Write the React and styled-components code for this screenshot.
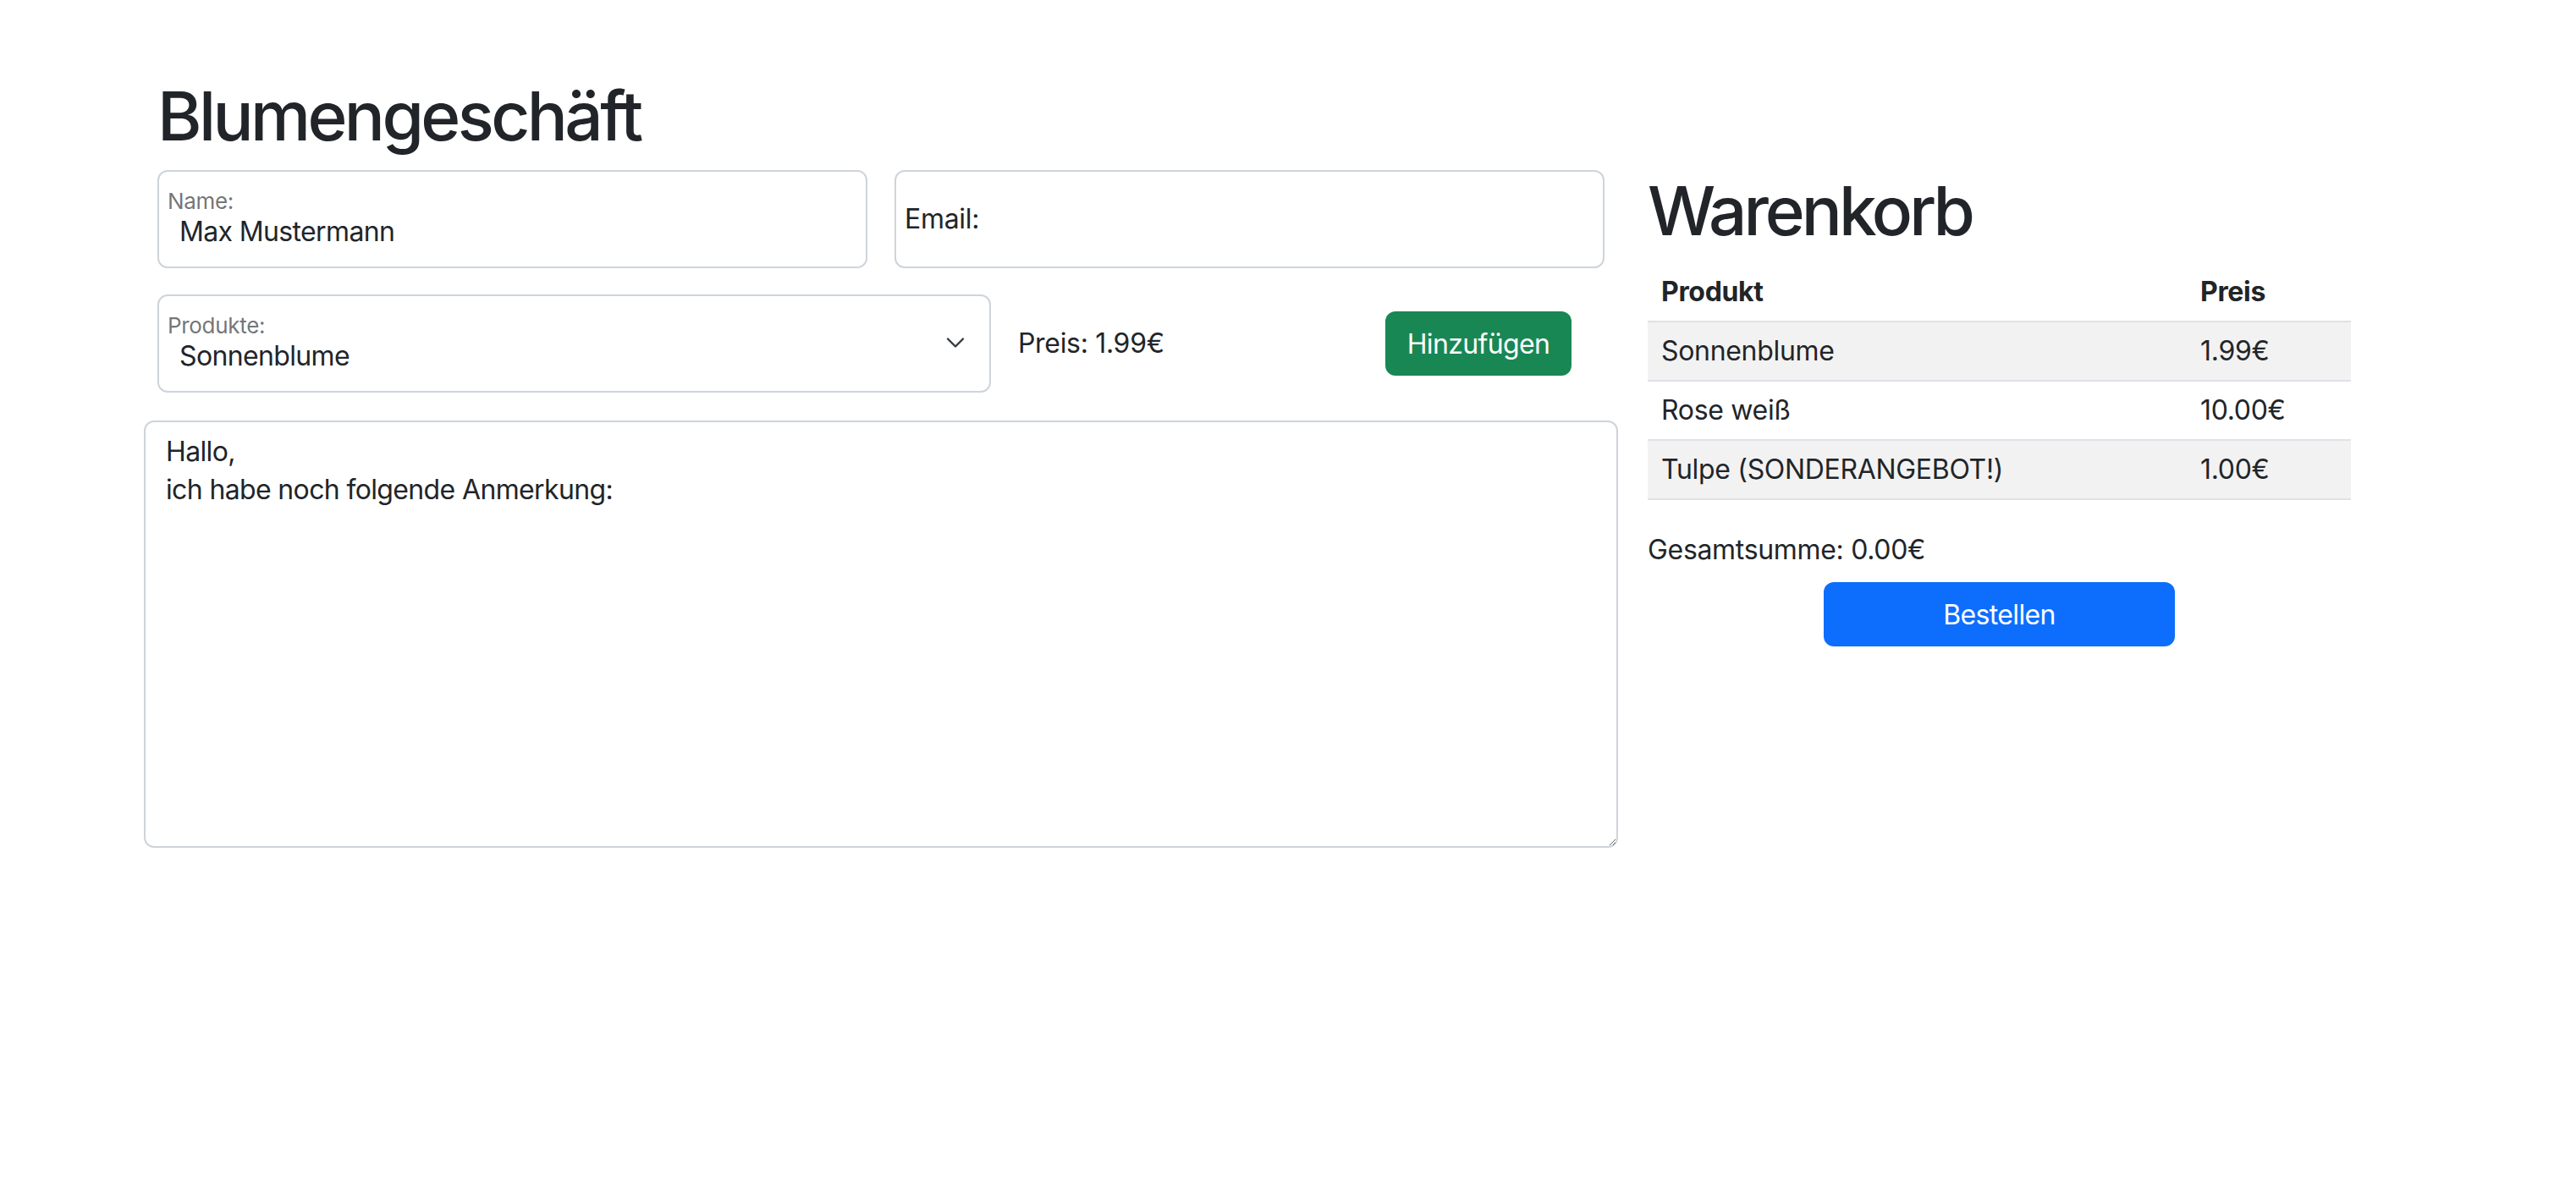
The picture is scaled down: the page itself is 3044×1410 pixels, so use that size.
import React from "react";
import styled, { createGlobalStyle } from "styled-components";

const GlobalStyle = createGlobalStyle`
  *, *::before, *::after {
    box-sizing: border-box;
  }
  body {
    margin: 0;
    background: #fff;
    color: #212529;
    font-family: Inter, "Liberation Sans", sans-serif;
    letter-spacing: -0.02em;
  }
`;

const Page = styled.main`
  padding: 89px 0 0 170px;
`;

const PageTitle = styled.h1`
  margin: 0 0 16px;
  padding-left: 16px;
  font-size: 80px;
  font-weight: 500;
  line-height: 96px;
  letter-spacing: -0.045em;
`;

const Layout = styled.div`
  display: flex;
  align-items: flex-start;
  gap: 35px;
`;

const OrderColumn = styled.section`
  width: 1742px;
`;

const FieldRow = styled.div`
  display: grid;
  grid-template-columns: ${(p) => p.$columns};
  column-gap: 32px;
  align-items: center;
  padding: 0 16px;
  & + & {
    margin-top: 31px;
  }
`;

const Field = styled.label`
  display: flex;
  flex-direction: column;
  justify-content: ${(p) => (p.$empty ? "center" : "flex-start")};
  height: 116px;
  padding: ${(p) => (p.$empty ? "0 10px" : "20px 24px 0 10px")};
  border: 2px solid #ced4da;
  border-radius: 12px;
  background: #fff;
`;

const FieldLabel = styled.span`
  font-size: ${(p) => (p.$large ? "32px" : "26px")};
  line-height: ${(p) => (p.$large ? "48px" : "30px")};
  color: ${(p) => (p.$large ? "#212529" : "rgba(33, 37, 41, 0.65)")};
`;

const FieldInput = styled.input`
  display: ${(p) => (p.$collapsed ? "none" : "block")};
  width: 100%;
  margin-top: 2px;
  padding: 0 0 0 14px;
  border: 0;
  outline: none;
  background: transparent;
  font: inherit;
  font-size: 32px;
  line-height: 38px;
  letter-spacing: -0.02em;
  color: #212529;
`;

const SelectField = styled.label`
  display: grid;
  grid-template-columns: 1fr auto;
  align-content: start;
  height: 116px;
  padding: 20px 24px 0 10px;
  border: 2px solid #ced4da;
  border-radius: 12px;
  background: #fff;
`;

const Select = styled.select`
  appearance: none;
  margin-top: 2px;
  padding: 0 0 0 14px;
  border: 0;
  outline: none;
  background: transparent;
  font: inherit;
  font-size: 32px;
  line-height: 38px;
  letter-spacing: -0.02em;
  color: #212529;
`;

const Chevron = styled.svg`
  grid-column: 2;
  grid-row: 1 / span 2;
  align-self: center;
  width: 32px;
  height: 24px;
`;

const Price = styled.span`
  font-size: 32px;
  line-height: 48px;
`;

const Button = styled.button`
  height: 76px;
  border: 0;
  border-radius: 12px;
  background: ${(p) => p.$color};
  color: #fff;
  font: inherit;
  font-size: 32px;
  letter-spacing: -0.02em;
  cursor: pointer;
`;

const AddButton = styled(Button)`
  width: 220px;
`;

const Notes = styled.textarea`
  display: block;
  width: 100%;
  height: 505px;
  margin-top: 33px;
  padding: 12px 24px;
  border: 2px solid #ced4da;
  border-radius: 12px;
  font: inherit;
  font-size: 32px;
  line-height: 45px;
  letter-spacing: -0.02em;
  color: #212529;
  outline: none;
`;

const CartColumn = styled.aside`
  width: 831px;
`;

const CartTitle = styled.h2`
  margin: 0 0 14px;
  font-size: 80px;
  font-weight: 500;
  line-height: 96px;
  letter-spacing: -0.05em;
`;

const CartTable = styled.table`
  width: 100%;
  border-collapse: collapse;
  font-size: 32px;
`;

const Cell = styled.td`
  width: ${(p) => p.$width || "auto"};
  padding: 11px 16px;
  line-height: 46px;
  text-align: left;
  border-bottom: 2px solid #dee2e6;
  font-weight: ${(p) => (p.$head ? 700 : 400)};
  background: ${(p) => (p.$striped ? "#f2f2f2" : "transparent")};
`;

const Total = styled.p`
  margin: 35px 0 0;
  font-size: 32px;
  line-height: 48px;
`;

const OrderButton = styled(Button)`
  display: block;
  width: 50%;
  margin: 14px auto 0;
`;

const cart = [
  { name: "Sonnenblume", price: 1.99 },
  { name: "Rose weiß", price: 10.0 },
  { name: "Tulpe (SONDERANGEBOT!)", price: 1.0 },
];

export default function App() {
  return (
    <Page>
      <GlobalStyle />
      <PageTitle>Blumengeschäft</PageTitle>
      <Layout>
        <OrderColumn>
          <FieldRow $columns="1fr 1fr">
            <Field>
              <FieldLabel>Name:</FieldLabel>
              <FieldInput type="text" defaultValue="Max Mustermann" />
            </Field>
            <Field $empty>
              <FieldLabel $large>Email:</FieldLabel>
              <FieldInput type="email" $collapsed />
            </Field>
          </FieldRow>
          <FieldRow $columns="985px 402px 220px">
            <SelectField>
              <FieldLabel>Produkte:</FieldLabel>
              <Select defaultValue="Sonnenblume">
                {cart.map((item) => (
                  <option key={item.name}>{item.name.replace(" (SONDERANGEBOT!)", "")}</option>
                ))}
              </Select>
              <Chevron viewBox="0 0 16 16" fill="none">
                <path d="m2 5 6 6 6-6" stroke="#343a40" strokeWidth="1.6" strokeLinecap="round" strokeLinejoin="round" />
              </Chevron>
            </SelectField>
            <Price>Preis: 1.99€</Price>
            <AddButton $color="#198754">Hinzufügen</AddButton>
          </FieldRow>
          <Notes defaultValue={"Hallo,\nich habe noch folgende Anmerkung:"} />
        </OrderColumn>
        <CartColumn>
          <CartTitle>Warenkorb</CartTitle>
          <CartTable>
            <thead>
              <tr>
                <Cell as="th" $head $width="637px">Produkt</Cell>
                <Cell as="th" $head>Preis</Cell>
              </tr>
            </thead>
            <tbody>
              {cart.map((item, i) => (
                <tr key={item.name}>
                  <Cell $striped={i % 2 === 0}>{item.name}</Cell>
                  <Cell $striped={i % 2 === 0}>{item.price.toFixed(2)}€</Cell>
                </tr>
              ))}
            </tbody>
          </CartTable>
          <Total>Gesamtsumme: 0.00€</Total>
          <OrderButton $color="#0d6efd">Bestellen</OrderButton>
        </CartColumn>
      </Layout>
    </Page>
  );
}
